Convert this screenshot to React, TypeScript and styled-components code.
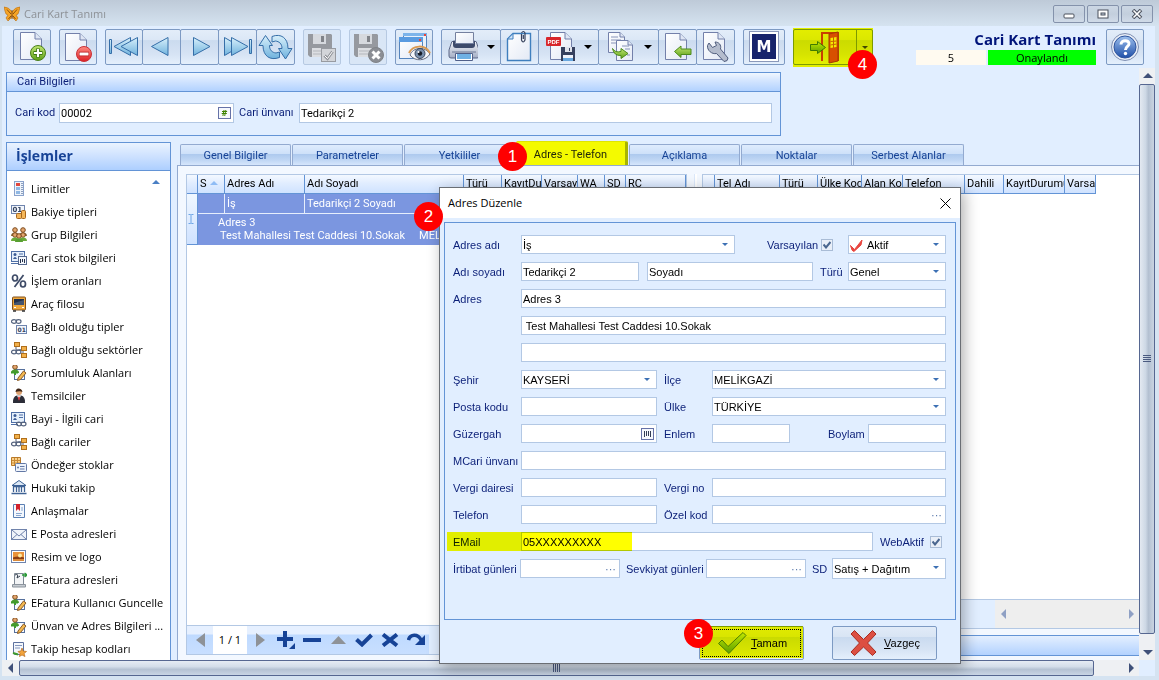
import React from "react";
import styled, { createGlobalStyle, css } from "styled-components";

const ui = `"Open Sans", "Noto Sans", sans-serif`;
const gridFont = `Roboto, "Noto Sans", sans-serif`;
const formFont = `"Liberation Sans", Arial, sans-serif`;

const Global = createGlobalStyle`
  * { box-sizing: border-box; }
  body { margin: 0; background: #d5e3f1; font: 11px/16px ${ui}; color: #000; }
  button, input, select { font: inherit; color: inherit; margin: 0; }
  svg { display: block; }
`;

/* ---------- window frame ---------- */

const Window = styled.div`
  position: relative;
  min-height: 100vh;
  display: flex;
  flex-direction: column;
  padding: 0 4px 4px 2px;
  background: #d5e3f1;
  overflow: hidden;
`;

const TitleBar = styled.header`
  height: 26px;
  display: flex;
  align-items: center;
  gap: 4px;
  margin: 0 -4px 0 -2px;
  padding: 2px 6px 0 4px;
  background: linear-gradient(#becad8, #d5e3f0);
  color: #8d9196;
`;

const TitleText = styled.span`
  flex: 1;
`;

const FrameButtons = styled.div`
  display: flex;
  gap: 2px;
`;

const FrameButton = styled.button`
  width: 32px;
  height: 18px;
  padding: 0;
  display: grid;
  place-items: center;
  border: 1px solid #8492ab;
  border-radius: 2px;
  background: linear-gradient(#ccd7e4, #c3cfdd 50%, #d0dbe8);
`;

const Client = styled.div`
  flex: 1;
  display: flex;
  flex-direction: column;
  background: #e1eeff;
`;

/* ---------- toolbar ---------- */

const Toolbar = styled.div`
  height: 42px;
  display: flex;
  gap: 8px;
  padding: 3px 11px 0 11px;
`;

const ToolGroup = styled.div`
  position: relative;
  display: flex;
`;

const ToolButton = styled.button<{ $w?: number }>`
  position: relative;
  width: ${(p) => p.$w ?? 38}px;
  height: 36px;
  padding: 0;
  flex: none;
  display: flex;
  align-items: center;
  border: 1px solid #7d9ac3;
  border-radius: 2px;
  background: linear-gradient(#e3edf9, #dbe7f6 30%, #cbdbef 31%, #d6e3f4 70%, #e4effc);
  & + & { margin-left: -1px; }
  &:disabled { border-color: #b6c9e2; background: #d9e6f6; }
`;

const Caret = styled.span`
  margin-left: 9px;
  border: 4px solid transparent;
  border-bottom: 0;
  border-top-color: #000;
`;

const ExitCaret = styled.span`
  align-self: stretch;
  margin-left: auto;
  width: 16px;
  border-left: 1px solid #7d9ac3;
  display: grid;
  place-items: center;
  &::after {
    content: "";
    border: 3px solid transparent;
    border-bottom: 0;
    border-top-color: #404860;
  }
`;

const Marker = styled.span`
  position: absolute;
  inset: -1px 0 1px 0;
  background: #ff0;
  mix-blend-mode: multiply;
  pointer-events: none;
`;

const Step = styled.span<{ $x: number; $y: number }>`
  position: absolute;
  left: ${(p) => p.$x}px;
  top: ${(p) => p.$y}px;
  z-index: 5;
  width: 29px;
  height: 29px;
  border-radius: 50%;
  background: #f00;
  color: #fff;
  font: 17px/29px ${formFont};
  text-align: center;
`;

const Status = styled.div`
  margin: 0 2px 0 auto;
  display: grid;
  grid-template-columns: 70px 108px;
  grid-template-rows: 21px 15px;
  column-gap: 2px;
  text-align: center;
  line-height: 15px;
`;

const StatusTitle = styled.h1`
  grid-column: 1 / 3;
  margin: 0;
  font-size: 15px;
  line-height: 21px;
  text-align: right;
  color: #00147a;
`;

const StatusCell = styled.span<{ $bg: string }>`
  background: ${(p) => p.$bg};
  overflow: hidden;
`;

/* ---------- scroll bars ---------- */

const Workspace = styled.div`
  flex: 1;
  display: grid;
  grid-template-columns: minmax(0, 1fr) 16px;
  grid-template-rows: minmax(0, 1fr) 16px;
`;

const ScrollV = styled.div`
  display: flex;
  flex-direction: column;
  background: #eef0f3;
`;

const ScrollH = styled.div`
  display: flex;
  background: #eef0f3;
`;

const ScrollArrow = styled.button`
  width: 17px;
  height: 16px;
  flex: none;
  padding: 0;
  border: 0;
  background: none;
  display: grid;
  place-items: center;
`;

const ThumbV = styled.div`
  flex: 1;
  margin: 0 0 10px;
  border: 1px solid #566791;
  border-radius: 2px;
  background: linear-gradient(90deg, #e3e9f1, #cdd8e5 40%, #b3c0d1 60%, #c9d4e2);
  display: grid;
  place-items: center;
`;

const ThumbH = styled.div`
  flex: 1;
  margin: 0 28px 0 0;
  border: 1px solid #566791;
  border-radius: 2px;
  background: linear-gradient(#e6ecf4, #d3dde9 40%, #b5c2d3 60%, #c9d5e5);
  display: grid;
  place-items: center;
`;

/* ---------- card header ---------- */

const Page = styled.main`
  padding: 4px 0 0 4px;
  display: flex;
  flex-direction: column;
  min-width: 0;
`;

const CardBox = styled.section`
  width: 775px;
  border: 1px solid #6394d6;
  font-family: ${gridFont};
`;

const CardTitle = styled.h2`
  margin: 0;
  height: 19px;
  padding: 0 10px;
  border-bottom: 1px solid #6394d6;
  background: linear-gradient(#f0f7ff, #d5e6ff 40%, #b2d2ff);
  font: 11px/18px ${gridFont};
  color: #0b1f78;
`;

const CardRow = styled.div`
  display: flex;
  align-items: center;
  padding: 11px 8px 12px;
  gap: 5px;
`;

const Label = styled.label<{ $w?: number }>`
  flex: none;
  width: ${(p) => (p.$w ? p.$w + "px" : "auto")};
  color: #0b1f78;
  white-space: nowrap;
`;

const box = css`
  height: 20px;
  border: 1px solid #b3c8e4;
  background: #fff;
`;

const Field = styled.span<{ $w?: number; $grow?: boolean; $h?: number }>`
  ${box}
  height: ${(p) => p.$h ?? 20}px;
  position: relative;
  flex: ${(p) => (p.$grow ? "1 1 0" : "none")};
  width: ${(p) => (p.$w ? p.$w + "px" : "auto")};
  min-width: 0;
  display: flex;
  align-items: center;
`;

const Input = styled.input`
  flex: 1;
  min-width: 0;
  width: 100%;
  height: 100%;
  padding: 0 1px;
  border: 0;
  outline: 0;
  background: transparent;
`;

const Select = styled.select<{ $pad?: number }>`
  appearance: none;
  flex: 1;
  min-width: 0;
  height: 100%;
  padding: 0 14px 0 ${(p) => p.$pad ?? 1}px;
  border: 0;
  outline: 0;
  background: transparent;
`;

const Drop = styled.span`
  position: absolute;
  right: 6px;
  top: 7px;
  border: 3px solid transparent;
  border-bottom: 0;
  border-top-color: #3c70b4;
  pointer-events: none;
`;

const Mini = styled.button`
  width: 13px;
  height: 12px;
  flex: none;
  margin-right: 2px;
  padding: 0;
  display: grid;
  place-items: center;
  border: 1px solid #6672a8;
  background: #f6f8fd;
  color: #3d8200;
  font: bold 9px/10px ${ui};
`;

const Dots = styled.button`
  width: 17px;
  flex: none;
  padding: 0;
  border: 0;
  background: none;
  color: #5474a8;
  line-height: 10px;
`;

/* ---------- side list ---------- */

const Columns = styled.div`
  flex: 1;
  display: flex;
  gap: 6px;
  margin-top: 6px;
`;

const Side = styled.nav`
  width: 165px;
  flex: none;
  border: 1px solid #6394d6;
  border-bottom: 0;
  background: #fff;
`;

const SideTitle = styled.h2`
  margin: 0;
  height: 28px;
  padding-left: 9px;
  border-bottom: 1px solid #6394d6;
  background: linear-gradient(#eaf3ff, #cde1ff 50%, #adcfff);
  color: #174396;
  font-size: 14px;
  line-height: 26px;
`;

const SideList = styled.ul`
  position: relative;
  margin: 0;
  padding: 6px 0 0;
  list-style: none;
`;

const SideUp = styled.span`
  position: absolute;
  right: 10px;
  top: 9px;
  border: 4px solid transparent;
  border-top: 0;
  border-bottom-color: #4a7fc4;
`;

const SideLink = styled.a`
  display: flex;
  align-items: center;
  gap: 4px;
  height: 23px;
  padding-left: 4px;
  color: #000;
  text-decoration: none;
  white-space: nowrap;
`;

/* ---------- tabs and grids ---------- */

const Content = styled.div`
  position: relative;
  flex: 1;
  min-width: 0;
  display: flex;
  flex-direction: column;
  font-family: ${gridFont};
`;

const Tabs = styled.div`
  display: flex;
  align-items: flex-end;
  gap: 1px;
  height: 23px;
  padding-left: 3px;
`;

const Tab = styled.button<{ $on?: boolean }>`
  width: 111px;
  height: 21px;
  padding: 2px 0 0;
  border: 1px solid #93aad0;
  border-bottom: 0;
  border-radius: 2px 2px 0 0;
  background: linear-gradient(#dfecfd, #cde0f9 45%, #adc9ee 46%, #bfd6f4 75%, #d6e6fc);
  color: #174396;
  ${(p) =>
    p.$on &&
    css`
      width: 112px;
      height: 24px;
      border: 0;
      border-top: 1px solid #dfe600;
      border-right: 3px solid #a8b400;
      background: #f4fa00;
      color: #22280a;
    `}
`;

const TabPanel = styled.div`
  flex: 1;
  display: flex;
  padding: 8px 0 0 8px;
  border: 1px solid #93aad0;
  border-width: 1px 0 0 1px;
  background: #f3f8ff;
`;

const Pane = styled.section<{ $w?: number }>`
  display: flex;
  flex-direction: column;
  flex: ${(p) => (p.$w ? "none" : "1 1 0")};
  width: ${(p) => (p.$w ? p.$w + "px" : "auto")};
  min-width: 0;
`;

const GridBox = styled.div`
  flex: 1;
  border: 1px solid #b3c8e4;
  border-right: 0;
  background: #fff;
  overflow: hidden;
`;

const Splitter = styled.div`
  width: 16px;
  flex: none;
  border-left: 1px solid #b3c8e4;
  background: linear-gradient(90deg, #f3f8ff 7px, #dbe8fa 7px, #dbe8fa 8px, #fff 8px, #fff 10px, #f3f8ff 10px);
`;

const Grid = styled.table`
  table-layout: fixed;
  width: 1px;
  border-collapse: separate;
  border-spacing: 0;
  th {
    height: 19px;
    padding: 0 0 0 2px;
    border-right: 1px solid #6394d6;
    border-bottom: 1px solid #6394d6;
    background: linear-gradient(#f4f9ff, #e1edff 45%, #cfe2ff);
    font-weight: normal;
    text-align: left;
    white-space: nowrap;
    overflow: hidden;
    line-height: 18px;
  }
`;

const Cell = styled.td`
  height: 20px;
  padding: 0 0 0 2px;
  background: #7b96e0;
  color: #fff;
  white-space: nowrap;
  border-right: 1px solid #e6eefc;
  border-bottom: 1px solid #e6eefc;
  line-height: 18px;
`;

const Preview = styled.td`
  height: 31px;
  padding: 2px 0 3px 20px;
  background: #7b96e0;
  color: #fff;
  white-space: nowrap;
  overflow: hidden;
  line-height: 13px;
`;

const PreviewLine = styled.div`
  display: flex;
  gap: 14px;
  padding-left: 2px;
`;

const Indicator = styled.td`
  padding: 0;
  border-right: 1px solid #6394d6;
  border-bottom: 1px solid #6394d6;
  background: linear-gradient(#f0f7ff, #cfe2ff);
  text-align: center;
`;

const SortMark = styled.span`
  display: inline-block;
  margin-left: 3px;
  border: 4px solid transparent;
  border-top: 0;
  border-bottom-color: #8fbcf5;
  vertical-align: 2px;
`;

const Navigator = styled.div`
  height: 29px;
  display: flex;
  margin-bottom: 5px;
  border: 1px solid #b3c8e4;
  border-top: 0;
  background: #e1eeff;
`;

const NavInner = styled.div`
  display: flex;
  width: 242px;
  background: linear-gradient(#e6f0ff 8px, #bfdaff 9px, #c8dfff);
`;

const NavButton = styled.button`
  width: 26px;
  padding: 0;
  border: 0;
  background: none;
  display: grid;
  place-items: center;
`;

const NavCount = styled.span`
  width: 34px;
  background: #fff;
  font-family: ${ui};
  text-align: center;
  line-height: 27px;
`;

const PaneScroll = styled.div`
  height: 29px;
  display: flex;
  justify-content: flex-end;
  border-bottom: 1px solid #b3c8e4;
  background: #e1eeff;
`;

const PaneTrack = styled.div`
  width: 144px;
  display: flex;
  justify-content: space-between;
  align-items: center;
  background: #eeeeee;
`;

const FooterBar = styled.div`
  height: 21px;
  margin: 6px 0 4px;
  border: 1px solid #6394d6;
  border-right: 0;
  background: linear-gradient(#e4efff, #b2d2ff);
`;

/* ---------- dialog ---------- */

const Dialog = styled.section`
  position: absolute;
  left: 439px;
  top: 187px;
  z-index: 3;
  width: 522px;
  border: 1px solid #6a6e74;
  background: #e1eeff;
  box-shadow: 3px 4px 14px rgba(0, 0, 0, 0.32);
  font: 11px/16px ${formFont};
`;

const DialogBar = styled.header`
  height: 30px;
  display: flex;
  align-items: center;
  justify-content: space-between;
  padding: 0 4px 0 8px;
  background: #fff;
  font-family: ${ui};
`;

const CloseButton = styled.button`
  width: 22px;
  height: 22px;
  padding: 0;
  border: 0;
  background: none;
  display: grid;
  place-items: center;
`;

const Form = styled.div`
  margin: 4px 4px 0;
  height: 398px;
  padding: 12px 9px 0 8px;
  border: 1px solid #6394d6;
  display: flex;
  flex-direction: column;
  gap: 8px;
`;

const Row = styled.div`
  position: relative;
  height: 19px;
  display: flex;
  align-items: center;
`;

const Space = styled.span<{ $w: number }>`
  flex: none;
  width: ${(p) => p.$w}px;
`;

const Check = styled.input`
  appearance: none;
  flex: none;
  width: 12px;
  height: 12px;
  border: 1px solid #a9bcd6;
  background: #e9eff8;
`;

const CheckWrap = styled.span<{ $ml: number; $mr: number }>`
  position: relative;
  display: flex;
  margin: 1px ${(p) => p.$mr}px 0 ${(p) => p.$ml}px;
  svg { position: absolute; left: 2px; top: 2px; pointer-events: none; }
`;

const RowMarker = styled(Marker)`
  inset: 0 auto 0 -6px;
  width: 185px;
`;

const Footer = styled.footer`
  position: relative;
  display: flex;
  justify-content: flex-end;
  gap: 28px;
  padding: 6px 23px 3px;
`;

const ActionButton = styled.button<{ $gap: number }>`
  position: relative;
  width: 105px;
  height: 34px;
  padding: 0 0 0 17px;
  display: flex;
  align-items: center;
  gap: ${(p) => p.$gap}px;
  border: 1px solid #7d9ac3;
  border-radius: 2px;
  background: linear-gradient(#e1ebf8, #d9e5f4 30%, #c9daef 31%, #d6e3f4 70%, #e4effc);
`;

const FocusRect = styled.span`
  position: absolute;
  inset: 2px;
  border: 1px dotted #000;
`;

/* ---------- drawings ---------- */

const HiddenSvg = styled.svg`
  position: absolute;
`;

const Defs = () => (
  <HiddenSvg width="0" height="0" aria-hidden="true">
    <defs>
      <linearGradient id="page" x1="0" y1="0" x2="1" y2="1"><stop offset="0" stopColor="#fff" /><stop offset="1" stopColor="#e3e9f5" /></linearGradient>
      <linearGradient id="arrow" x1="0" y1="0" x2="0" y2="1"><stop offset="0" stopColor="#d8f0fb" /><stop offset="1" stopColor="#6fb2dd" /></linearGradient>
      <linearGradient id="green" x1="0" y1="0" x2="0" y2="1"><stop offset="0" stopColor="#c3e873" /><stop offset="1" stopColor="#5c9f16" /></linearGradient>
      <linearGradient id="red" x1="0" y1="0" x2="0" y2="1"><stop offset="0" stopColor="#ff8a80" /><stop offset="1" stopColor="#dd1f25" /></linearGradient>
      <linearGradient id="blue" x1="0" y1="0" x2="0" y2="1"><stop offset="0" stopColor="#9dc0ee" /><stop offset="1" stopColor="#1f4fa8" /></linearGradient>
      <linearGradient id="metal" x1="0" y1="0" x2="0" y2="1"><stop offset="0" stopColor="#f4f6fa" /><stop offset="1" stopColor="#a3adc4" /></linearGradient>
    </defs>
  </HiddenSvg>
);

const Ico = ({ children, w = 36, h = 34 }: { children: React.ReactNode; w?: number; h?: number }) => (
  <svg width={w} height={h} viewBox={`0 0 ${w} ${h}`} fill="none" aria-hidden="true">{children}</svg>
);

const Sheet = ({ x, y, w, h, f = 7 }: { x: number; y: number; w: number; h: number; f?: number }) => (
  <g transform={`translate(${x} ${y})`} stroke="#7380aa">
    <path d={`M.5 .5H${w - f}L${w - 0.5} ${f}V${h - 0.5}H.5Z`} fill="url(#page)" />
    <path d={`M${w - f} .5V${f}H${w - 0.5}`} fill="#dfe6f4" />
  </g>
);

const Disk = () => (
  <g>
    <path d="M4 4H27L28 5V27H6L4 25Z" fill="#96999f" />
    <path d="M9 4H22V14H9Z" fill="#d6d9de" />
    <path d="M17 6H20V12H17Z" fill="#808389" />
    <path d="M8 18H24V27H8Z" fill="#dcdee2" />
    <path d="M9 21H23M9 24H23" stroke="#b4b7bc" />
  </g>
);

const ICONS = {
  add: <><Sheet x={6} y={2} w={22} h={28} /><circle cx="24" cy="23" r="7.5" fill="url(#green)" stroke="#4a7f1b" /><path d="M24 18.500V27.500M19.500 23H28.500" stroke="#3c7412" strokeWidth="4" /><path d="M24 19V27M20 23H28" stroke="#fff" strokeWidth="2.200" /></>,
  remove: <><Sheet x={5} y={3} w={22} h={28} /><circle cx="24" cy="24" r="7.500" fill="url(#red)" stroke="#c93238" /><path d="M19 24H29" stroke="#b3181e" strokeWidth="4.500" /><path d="M19.500 24H28.500" stroke="#fff" strokeWidth="3" /></>,
  first: <g stroke="#356ea8" fill="url(#arrow)"><path d="M3.500 9.500H5.500V23.500H3.500Z" /><path d="M24.500 7.500V25.500L8 16.500Z" /><path d="M31.500 7.500V25.500L15 16.500Z" /></g>,
  prev: <path d="M25 7.500V25.500L8.500 16.500Z" stroke="#356ea8" fill="url(#arrow)" />,
  next: <path d="M12.500 7.500V25.500L29 16.500Z" stroke="#356ea8" fill="url(#arrow)" />,
  last: <g stroke="#356ea8" fill="url(#arrow)"><path d="M5.500 7.500V25.500L21 16.500Z" /><path d="M12.500 7.500V25.500L29 16.500Z" /><path d="M30.500 9.500H32.500V23.500H30.500Z" /></g>,
  refresh: <g stroke="#356ea8" fill="url(#arrow)" strokeLinejoin="round"><path d="M8.500 5.500L15.500 15.500H12.500C12.500 20 15 22.500 19 23L22.500 22V27.500C13 31 6 26 6 15.500H2Z" /><path d="M28.500 29L21.500 18.500H25C25 13.500 22 11.500 18.500 11L15 12V6.500C24 3 31 8 31 18.500H35Z" /></g>,
  save: <><Disk /><rect x="17.500" y="18.500" width="14" height="13" fill="#d3d5d9" stroke="#989ba1" /><path d="M20.500 25.500L23.500 28.500L28.500 21.500" stroke="#92959b" strokeWidth="3" /><path d="M20.500 25.500L23.500 28.500L28.500 21.500" stroke="#fff" strokeWidth="1" /></>,
  cancel: <><Disk /><circle cx="26" cy="25" r="7.500" fill="#8b8e94" stroke="#808388" /><path d="M22.500 21.500L29.500 28.500M29.500 21.500L22.500 28.500" stroke="#fff" strokeWidth="3" /></>,
  preview: <><rect x="7.500" y="3.500" width="23" height="18" fill="#e8f1fb" stroke="#5584bd" /><path d="M7 3H31V6H7Z" fill="#7db4ea" /><rect x="3.500" y="7.500" width="23" height="21" fill="url(#page)" stroke="#5584bd" /><path d="M3 7H27V12H3Z" fill="#5a9be0" /><path d="M23 9H25V11H23ZM28 4H30V6H28Z" fill="#e8433a" /><path d="M14 25C17 17 29 16 34 24C30 31 19 32 14 25Z" fill="#f6f7fa" stroke="#626a7e" /><path d="M13 23C17 15 29 14 34 23" stroke="#d99a52" strokeWidth="2" /><circle cx="24" cy="23.500" r="5" fill="#7a90ac" stroke="#3b485f" /><circle cx="24" cy="23.500" r="2.200" fill="#161b27" /><circle cx="22.500" cy="22" r="1" fill="#fff" /></>,
  print: <><path d="M9 14Q9 11 12 11H32Q35 11 35 14L37 20V26Q37 28 35 28H9Q7 28 7 26V20Z" fill="url(#metal)" stroke="#5b6787" /><path d="M11 11H33V15Q33 18 30 18H14Q11 18 11 15Z" fill="#3d4a6b" /><path d="M13.500 2.500H31.500V13.500H13.500Z" fill="url(#page)" stroke="#74809f" /><path d="M10 22H34" stroke="#6d7894" /><path d="M13.500 23.500H30.500V30.500H13.500Z" fill="#fff" stroke="#50608a" /><path d="M15 24H29V29H15Z" fill="#6fb1e4" /></>,
  attach: <><path d="M12 3.500H29.500V30.500H6.500V9Z" fill="url(#page)" stroke="#3f7fbe" strokeWidth="1.400" /><path d="M12 3.500V9H6.500Z" fill="#cfe3f7" stroke="#3f7fbe" /><path d="M20.500 4V10Q22 14 24 10V3Q22.500 0 20.500 3M22.300 5V9" stroke="#36415c" strokeWidth="1.200" /></>,
  pdf: <><Sheet x={11} y={2} w={22} h={28} /><rect x="7" y="7" width="15" height="9" rx="1" fill="#d8262b" /><text x="8.500" y="14" fontFamily="Liberation Sans" fontSize="6" fontWeight="700" fill="#fff">PDF</text><rect x="22" y="17" width="14" height="14" fill="#35405e" /><path d="M26 17H33V22H26Z" fill="#dfe3ec" /><path d="M30.500 18V21" stroke="#35405e" /><path d="M24 25H34V31H24Z" fill="#eef2fa" /><path d="M24 28H34V31H24Z" fill="#69a8df" /></>,
  copy: <><Sheet x={9} y={2} w={17} h={21} f={5} /><path d="M12 7H19M12 10H22M12 13H17" stroke="#8894b8" /><Sheet x={17} y={10} w={17} h={21} f={5} /><path d="M23 16H30M26 19H31M28 25H31" stroke="#8894b8" /><path d="M13.500 18.500Q16 23 22 21.500V18.500L29 23.500L22 28.500V25.500Q15 26 13.500 18.500Z" fill="url(#green)" stroke="#4c8a1c" /></>,
  import: <><Sheet x={6} y={3} w={22} h={27} /><path d="M15.500 21.500L22 16V19H32V24.500H22V27.500Z" fill="url(#green)" stroke="#4c8a1c" /></>,
  wrench: <><Sheet x={6} y={2} w={22} h={28} /><path d="M12 13L15.500 17.500L19.500 15.500L18 12C22 12 24.500 15 23.500 19L31 28Q31 31.500 27 31.500L19.500 23.500C15 24.500 10 20.500 10.500 15.500Z" fill="#b4bccd" stroke="#4f5c7c" strokeLinejoin="round" /></>,
  help: <><circle cx="18" cy="17" r="13.500" fill="#e9eef7" stroke="#7e8fb2" /><circle cx="18" cy="17" r="11" fill="url(#blue)" stroke="#2f559d" /><path d="M14 14.500C14 9.500 22.500 9.500 22 14C21.800 16.500 18.500 16.500 18.500 20" stroke="#fff" strokeWidth="3" /><circle cx="18.500" cy="23.500" r="1.700" fill="#fff" /></>,
};

const MLogo = () => (
  <Ico w={40}>
    <rect x="5.500" y="1.500" width="29" height="30" fill="#fff" stroke="#8a98ba" />
    <rect x="8" y="4" width="24" height="25" fill="#17236b" />
    <text x="20" y="22" textAnchor="middle" fontFamily="DejaVu Sans" fontSize="15" fontWeight="700" fill="#fff">M</text>
  </Ico>
);

const Door = () => (
  <Ico w={50}>
    <path d="M28 31V3H44V31" stroke="#c8401c" strokeWidth="2" />
    <path d="M35 4L44 2V31L35 33Z" fill="#d8501c" stroke="#a53a10" />
    <path d="M36.500 8L42.500 7V17L36.500 18Z" fill="#f5e9b0" />
    <path d="M39.500 7V18M36.500 11.500L42.500 11M36.500 15L42.500 14" stroke="#c8601c" />
    <path d="M16.500 14.500H23.500V11.500L31.500 17.500L23.500 23.500V20.500H16.500Z" fill="url(#green)" stroke="#3f7a14" />
  </Ico>
);

const Person = ({ x = 0, y = 0, c = "#6bab3a" }: { x?: number; y?: number; c?: string }) => (
  <g transform={`translate(${x} ${y})`}><circle cx="4" cy="3" r="2.300" fill="#e3a56e" stroke="#7c4a1c" /><path d="M0 9Q0 5.500 4 5.500T8 9Z" fill={c} /></g>
);
const Pencil = () => <path d="M7 13L12.500 6L15 8L9.500 14.500L6.500 15.500Z" fill="#f2b850" stroke="#8b5a25" />;
const Chain = ({ x, y }: { x: number; y: number }) => (
  <g transform={`translate(${x} ${y})`} stroke="#56647f" strokeWidth="1.200"><ellipse cx="3" cy="2.500" rx="2.500" ry="1.800" /><ellipse cx="7.500" cy="2.500" rx="2.500" ry="1.800" /></g>
);
const edit = <><rect x="3.500" y="4.500" width="10" height="10" fill="#f7faff" stroke="#56709c" /><Person y={-1} c="#4c9a30" /><path d="M0 7.500H7M4 7V10" stroke="#3f9a2c" strokeWidth="2" /><Pencil /></>;
const tree = <><path d="M5 4V8H12V13M8 8H12" stroke="#555e77" /><g fill="#f2b04a" stroke="#b06f1b"><rect x="3.500" y=".5" width="5" height="4" /><rect x="10.500" y="4.500" width="5" height="4" /><rect x="10.500" y="11.500" width="5" height="4" /></g><Chain x={0} y={7.500} /></>;

const SIDE: [string, React.ReactNode][] = [
  ["Limitler", <><rect x="3.500" y=".5" width="9" height="14" fill="#eef4fb" stroke="#8aa2cb" /><path d="M5 2H9V5H5Z" fill="#e0463c" /><path d="M5 6H9V9H5ZM5 10H9V13H5Z" fill="#8fb7e3" /><path d="M11 2V13" stroke="#2d4a80" strokeDasharray="1 1" /></>],
  ["Bakiye tipleri", <><rect x=".5" y="1.500" width="13" height="8" fill="#f2f6fc" stroke="#6f84ad" /><text x="1.500" y="8" fontFamily="DejaVu Sans" fontSize="7" fontWeight="700" fill="#34435f">01</text><rect x="5.500" y="9.500" width="5" height="5" rx="1" fill="#f5b75a" stroke="#a8661a" /><rect x="10.500" y="6.500" width="4" height="8" rx="1" fill="#f5b75a" stroke="#a8661a" /></>],
  ["Grup Bilgileri", <><Person c="#8a6a3c" /><Person x={8} c="#8a6a3c" /><Person x={0} y={5} /><Person x={8} y={5} /><Person x={4} y={6} c="#58a032" /></>],
  ["Cari stok bilgileri", <><rect x=".5" y="1.500" width="13" height="10" fill="#e6f0fb" stroke="#4f6fa6" /><circle cx="4" cy="4.500" r="1.500" fill="#3c5c96" /><path d="M2 9Q4 5 6 9Z" fill="#3c5c96" /><path d="M8 4H12M0 13.500H7" stroke="#4f6fa6" /><rect x="7.500" y="6.500" width="8" height="8" fill="#f5f8fd" stroke="#56698f" /><path d="M9.500 9V13M11.500 9V12M13.500 9V13" stroke="#26324b" /></>],
  ["İşlem oranları", <><g stroke="#3d4a66" strokeWidth="1.700"><ellipse cx="4" cy="5" rx="2.500" ry="3" /><ellipse cx="12" cy="11" rx="2.500" ry="3" /><path d="M12.500 2L3.500 14" /></g></>],
  ["Araç filosu", <><rect x="1.500" y="1" width="13" height="13" rx="1" fill="#f0a83c" stroke="#80501c" /><path d="M3 3H13V9H3Z" fill="#223048" /><path d="M3 7L13 4V9H3Z" fill="#45556f" /><path d="M3 11H5V12H3ZM11 11H13V12H11Z" fill="#fff" /><path d="M2 15H5M11 15H14" stroke="#333" strokeWidth="1.500" /></>],
  ["Bağlı olduğu tipler", <><Chain x={0} y={0} /><rect x="5.500" y="6.500" width="10" height="8" fill="#f2f6fc" stroke="#6f84ad" /><text x="6.500" y="13" fontFamily="DejaVu Sans" fontSize="6" fontWeight="700" fill="#34435f">01</text></>],
  ["Bağlı olduğu sektörler", tree],
  ["Sorumluluk Alanları", edit],
  ["Temsilciler", <><circle cx="8" cy="4" r="3" fill="#dca070" /><path d="M4.500 4Q5 0 8 .5T11.500 4Q9 2.500 4.500 4Z" fill="#3c2415" /><path d="M2 15Q1.500 8.500 6 7.500H10Q14.500 8.500 14 15Z" fill="#2b2d38" /><path d="M6 7.500L8 12L10 7.500Z" fill="#fff" /><path d="M8 8L9 10L8 13L7 10Z" fill="#d02020" /></>],
  ["Bayi - İlgili cari", <><rect x=".5" y="1.500" width="13" height="10" fill="#e6f0fb" stroke="#4f6fa6" /><circle cx="4" cy="4.500" r="1.500" fill="#3c5c96" /><path d="M2 9Q4 5 6 9Z" fill="#3c5c96" /><path d="M8 4H12M8 6.500H12M0 13.500H7" stroke="#4f6fa6" /><Chain x={5} y={10.500} /></>],
  ["Bağlı cariler", tree],
  ["Öndeğer stoklar", <><path d="M.5 .5H9.500V8.500H.5Z" fill="#fbd18a" stroke="#b97a28" /><path d="M3.500 1V8M6.500 1V8M1 3.500H9M1 6H9" stroke="#c98a35" /><rect x="4.500" y="6.500" width="11" height="8" rx="1" fill="#eef3fb" stroke="#6278a5" /><circle cx="7" cy="10.500" r="1" fill="#6278a5" /><path d="M9 9.500H13.500M9 12H13.500" stroke="#6278a5" /></>],
  ["Hukuki takip", <><path d="M8 .5L15 5.500H1Z" fill="#dce8f6" stroke="#3e6294" /><path d="M2.500 6V12M5.500 6V12M8 6V12M10.500 6V12M13.500 6V12" stroke="#3e6294" strokeWidth="1.300" /><path d="M.5 13.500H15.500M2 6.500H14" stroke="#3e6294" strokeWidth="1.500" /></>],
  ["Anlaşmalar", <><path d="M2.500 1.500H13.500V14.500H2.500Z" fill="#f4f8fd" stroke="#5c80b4" /><path d="M5 1H9V8L7 6L5 8Z" fill="#d3222c" /><path d="M5 10.500H11M5 12.500H10M11 4V8" stroke="#8aa6cf" /></>],
  ["E Posta adresleri", <><rect x=".5" y="3.500" width="15" height="10" fill="#eff3fa" stroke="#7083ab" /><path d="M1 4L8 10L15 4M1 13L6 8.500M15 13L10 8.500" stroke="#7083ab" /></>],
  ["Resim ve logo", <><rect x=".5" y="1.500" width="14" height="12" fill="#fff" stroke="#6f84ad" /><path d="M2 3H13V12H2Z" fill="#e9923a" /><path d="M2 8.500Q7 6.500 13 8.500V12H2Z" fill="#8c3d12" /><path d="M2 10H13V12H2Z" fill="#d98a3c" /><circle cx="9" cy="6.500" r="2" fill="#ffe9a0" /></>],
  ["EFatura adresleri", <><path d="M3.500 1.500H12.500V12.500H3.500Z" fill="#f2f4f6" stroke="#7e8894" /><path d="M4 3Q8 1 6 6L9 4" stroke="#333e4d" /><path d="M11 3H16M13.500 1L16 3L13.500 5" stroke="#2c9a3a" strokeWidth="1.400" /><path d="M1.500 12.500H14.500V15H1.500Z" fill="#c6cbd1" stroke="#8c949d" /></>],
  ["EFatura Kullanıcı Guncelle", edit],
  ["Ünvan ve Adres Bilgileri ...", edit],
  ["Takip hesap kodları", <><path d="M2.500 1.500H12.500V13.500H4Q1.500 13 2.500 10Z" fill="#f4f7fc" stroke="#5d719e" /><path d="M4 4.500H11M4 7H9" stroke="#8496bc" /><path d="M11 7L12 10L15.500 10.500L13 12.500L14 15.500L11 14L8.500 15.500L9 12.500L7 10.500L10 10Z" fill="#f2a43c" stroke="#b86c1c" strokeWidth=".7" /><path d="M2 12L7 13.500" stroke="#3f9a2c" strokeWidth="2" /></>],
];

const Butterfly = () => (
  <svg width="16" height="16" viewBox="0 0 16 16" aria-hidden="true">
    <path d="M8 6Q5 1 0 1L1 5L2 8L4 9L2 12L4 15L7 12L8 9L9 12L12 15L14 12L12 9L14 8L15 5L16 1Q11 1 8 6Z" fill="#f6a526" stroke="#b9690c" strokeWidth=".6" />
    <path d="M8 4V13M7 8L3 3.500M9 8L13 3.500M7 10L4.500 13M9 10L11.500 13" stroke="#7a430c" strokeWidth=".9" />
  </svg>
);

const Arrow = ({ dir, c = "#3f5079" }: { dir: "u" | "d" | "l" | "r"; c?: string }) => {
  const d = { u: "M0 7L5 2L10 7Z", d: "M0 3L5 8L10 3Z", l: "M7 0L2 5L7 10Z", r: "M3 0L8 5L3 10Z" }[dir];
  return <svg width="10" height="10" viewBox="0 0 10 10" aria-hidden="true"><path d={d} fill={c} /></svg>;
};

const TickMark = () => (
  <svg width="8" height="8" viewBox="0 0 8 8" fill="none" aria-hidden="true"><path d="M.5 3.500L3 6.500L7.500 1" stroke="#4a668f" strokeWidth="2" /></svg>
);

/* ---------- form parts ---------- */

type FP = { id: string; label: string; value?: string; w?: number; grow?: boolean; children?: React.ReactNode };

const Text = ({ id, label, value = "", w, grow, children }: FP) => (
  <Field $w={w} $grow={grow} $h={19}>
    <Input id={id} aria-label={label} defaultValue={value} />
    {children}
  </Field>
);

const Combo = ({ id, label, value = "", w, grow, h = 19, pad, children }: FP & { h?: number; pad?: number }) => (
  <Field $w={w} $grow={grow} $h={h}>
    {children}
    <Select id={id} aria-label={label} defaultValue={value} $pad={pad}>
      <option>{value}</option>
    </Select>
    <Drop />
  </Field>
);

const AddressDialog = () => (
  <Dialog role="dialog" aria-label="Adres Düzenle">
    <Step $x={-26} $y={14}>2</Step>
    <DialogBar>
      Adres Düzenle
      <CloseButton aria-label="Kapat">
        <svg width="11" height="11" viewBox="0 0 11 11"><path d="M.5 .5L10.500 10.500M10.500 .5L.5 10.500" stroke="#000" /></svg>
      </CloseButton>
    </DialogBar>
    <Form>
      <Row>
        <Label htmlFor="adi" $w={68}>Adres adı</Label>
        <Combo id="adi" label="Adres adı" value="İş" w={214} />
        <Space $w={32} />
        <Label htmlFor="vars" $w={49}>Varsayılan</Label>
        <CheckWrap $ml={5} $mr={15}><Check id="vars" type="checkbox" defaultChecked /><TickMark /></CheckWrap>
        <Combo id="aktif" label="Durum" value="Aktif" grow pad={4}>
          <svg width="14" height="14" viewBox="0 0 14 14"><path d="M1.500 7.500L5.500 11.500L13 2L12 7L5.500 13Q4 14 3 12Z" fill="#e8453f" stroke="#e8453f" /></svg>
        </Combo>
      </Row>
      <Row>
        <Label htmlFor="ad" $w={68}>Adı soyadı</Label>
        <Text id="ad" label="Adı" value="Tedarikçi 2" w={118} />
        <Space $w={8} />
        <Text id="soyad" label="Soyadı" value="Soyadı" grow />
        <Space $w={7} />
        <Label htmlFor="turu" $w={28}>Türü</Label>
        <Combo id="turu" label="Türü" value="Genel" w={98} />
      </Row>
      <Row><Label htmlFor="adres1" $w={68}>Adres</Label><Text id="adres1" label="Adres 1" value="Adres 3" grow /></Row>
      <Row><Space $w={68} /><Text id="adres2" label="Adres 2" value=" Test Mahallesi Test Caddesi 10.Sokak" grow /></Row>
      <Row><Space $w={68} /><Text id="adres3" label="Adres 3" grow /></Row>
      <Row>
        <Label htmlFor="sehir" $w={68}>Şehir</Label><Combo id="sehir" label="Şehir" value="KAYSERİ" w={136} />
        <Space $w={7} /><Label htmlFor="ilce" $w={48}>İlçe</Label><Combo id="ilce" label="İlçe" value="MELİKGAZİ" grow />
      </Row>
      <Row>
        <Label htmlFor="posta" $w={68}>Posta kodu</Label><Text id="posta" label="Posta kodu" w={136} />
        <Space $w={7} /><Label htmlFor="ulke" $w={48}>Ülke</Label><Combo id="ulke" label="Ülke" value="TÜRKİYE" grow />
      </Row>
      <Row>
        <Label htmlFor="guz" $w={68}>Güzergah</Label>
        <Text id="guz" label="Güzergah" w={136}>
          <Mini aria-label="Güzergah seç"><svg width="9" height="6" viewBox="0 0 9 6"><path d="M1.500 0V6M3.500 0V5M5.500 0V5M7.500 0V6" stroke="#333c55" /></svg></Mini>
        </Text>
        <Space $w={7} /><Label htmlFor="enlem" $w={48}>Enlem</Label><Text id="enlem" label="Enlem" w={78} />
        <Space $w={38} /><Label htmlFor="boylam" $w={40}>Boylam</Label><Text id="boylam" label="Boylam" grow />
      </Row>
      <Row><Label htmlFor="mcari" $w={68}>MCari ünvanı</Label><Text id="mcari" label="MCari ünvanı" grow /></Row>
      <Row>
        <Label htmlFor="vd" $w={68}>Vergi dairesi</Label><Text id="vd" label="Vergi dairesi" w={136} />
        <Space $w={7} /><Label htmlFor="vn" $w={48}>Vergi no</Label><Text id="vn" label="Vergi no" grow />
      </Row>
      <Row>
        <Label htmlFor="tel" $w={68}>Telefon</Label><Text id="tel" label="Telefon" w={136} />
        <Space $w={7} /><Label htmlFor="ozel" $w={48}>Özel kod</Label>
        <Text id="ozel" label="Özel kod" grow><Dots aria-label="Özel kod seç">···</Dots></Text>
      </Row>
      <Row>
        <Label htmlFor="email" $w={68}>EMail</Label><Text id="email" label="EMail" value="05XXXXXXXXX" w={352} />
        <Space $w={7} /><Label htmlFor="web" $w={46}>WebAktif</Label>
        <CheckWrap $ml={4} $mr={0}><Check id="web" type="checkbox" defaultChecked /><TickMark /></CheckWrap>
        <RowMarker />
      </Row>
      <Row>
        <Label htmlFor="irt" $w={67}>İrtibat günleri</Label>
        <Text id="irt" label="İrtibat günleri" w={100}><Dots aria-label="İrtibat günü seç">···</Dots></Text>
        <Space $w={6} /><Label htmlFor="sevk" $w={80}>Sevkiyat günleri</Label>
        <Text id="sevk" label="Sevkiyat günleri" w={100}><Dots aria-label="Sevkiyat günü seç">···</Dots></Text>
        <Space $w={6} /><Label htmlFor="sd" $w={20}>SD</Label>
        <Combo id="sd" label="SD" value="Satış + Dağıtım" grow h={21} />
      </Row>
    </Form>
    <Footer>
      <ActionButton $gap={4}>
        <svg width="30" height="24" viewBox="0 0 30 24"><path d="M1.500 12.500L5 9L11 15.500L26 1.500L29 4.500L12 22.500Z" fill="url(#green)" stroke="#4c7d1a" /></svg>
        <span><u>T</u>amam</span>
        <FocusRect />
        <Marker />
        <Step $x={-16} $y={-8}>3</Step>
      </ActionButton>
      <ActionButton $gap={7}>
        <svg width="27" height="26" viewBox="0 0 27 26"><path d="M4.500 .5L13.500 9.500L22.500 .5L26 4L17.500 13L26 22L22.500 25.500L13.500 17L4.500 25.500L1 22L9.500 13L1 4Z" fill="#dc4f42" stroke="#a82c20" /></svg>
        <span><u>V</u>azgeç</span>
      </ActionButton>
    </Footer>
  </Dialog>
);

const cols = (ws: number[]) => <colgroup>{ws.map((w, i) => <col key={i} style={{ width: w }} />)}</colgroup>;

const TABS = ["Genel Bilgiler", "Parametreler", "Yetkililer", "Adres - Telefon", "Açıklama", "Noktalar", "Serbest Alanlar"];

const Tool = ({ icon, name, w, caret, disabled }: { icon: keyof typeof ICONS; name: string; w?: number; caret?: boolean; disabled?: boolean }) => (
  <ToolButton $w={w} title={name} aria-label={name} disabled={disabled}>
    <Ico>{ICONS[icon]}</Ico>
    {caret && <Caret />}
  </ToolButton>
);

export default function App() {
  return (
    <Window>
      <Global />
      <Defs />
      <TitleBar>
        <Butterfly />
        <TitleText>Cari Kart Tanımı</TitleText>
        <FrameButtons>
          <FrameButton aria-label="Küçült"><svg width="12" height="10" viewBox="0 0 12 10"><rect x="1" y="5" width="10" height="4" rx="1" fill="#fff" stroke="#4a505c" /></svg></FrameButton>
          <FrameButton aria-label="Ekranı kapla"><svg width="12" height="10" viewBox="0 0 12 10"><rect x="1" y="1" width="10" height="8" fill="#fff" stroke="#4a505c" /><rect x="4" y="4" width="4" height="2" fill="#c3cfdd" stroke="#4a505c" /></svg></FrameButton>
          <FrameButton aria-label="Kapat"><svg width="12" height="10" viewBox="0 0 12 10"><path d="M2 1L10 9M10 1L2 9" stroke="#4a505c" strokeWidth="3.600" /><path d="M2.500 1.500L9.500 8.500M9.500 1.500L2.500 8.500" stroke="#fff" strokeWidth="1.600" /></svg></FrameButton>
        </FrameButtons>
      </TitleBar>
      <Client>
        <Toolbar>
          <ToolGroup><Tool icon="add" name="Yeni" /></ToolGroup>
          <ToolGroup><Tool icon="remove" name="Sil" /></ToolGroup>
          <ToolGroup>
            <Tool icon="first" name="İlk" />
            <Tool icon="prev" name="Önceki" w={39} />
            <Tool icon="next" name="Sonraki" w={39} />
            <Tool icon="last" name="Son" w={39} />
            <Tool icon="refresh" name="Yenile" w={39} />
          </ToolGroup>
          <ToolGroup><Tool icon="save" name="Kaydet" disabled /></ToolGroup>
          <ToolGroup><Tool icon="cancel" name="Kaydetme" disabled /></ToolGroup>
          <ToolGroup><Tool icon="preview" name="Önizle" /></ToolGroup>
          <ToolGroup>
            <Tool icon="print" name="Yazdır" w={60} caret />
            <Tool icon="attach" name="Ekle" w={39} />
            <Tool icon="pdf" name="PDF" w={61} caret />
            <Tool icon="copy" name="Kopyala" w={61} caret />
            <Tool icon="import" name="İçe al" w={39} />
            <Tool icon="wrench" name="Ayarlar" w={39} />
          </ToolGroup>
          <ToolGroup><ToolButton $w={42} aria-label="M"><MLogo /></ToolButton></ToolGroup>
          <ToolGroup>
            <ToolButton $w={80} aria-label="Çıkış"><Door /><ExitCaret /></ToolButton>
            <Marker />
            <Step $x={55} $y={21}>4</Step>
          </ToolGroup>
          <Status>
            <StatusTitle>Cari Kart Tanımı</StatusTitle>
            <StatusCell $bg="#fffaf0">5</StatusCell>
            <StatusCell $bg="#00ff00">Onaylandı</StatusCell>
          </Status>
          <ToolGroup><Tool icon="help" name="Yardım" /></ToolGroup>
        </Toolbar>

        <Workspace>
          <Page>
            <CardBox>
              <CardTitle>Cari Bilgileri</CardTitle>
              <CardRow>
                <Label htmlFor="kod" $w={39}>Cari kod</Label>
                <Field $w={175}><Input id="kod" defaultValue="00002" /><Mini aria-label="Cari seç">#</Mini></Field>
                <Label htmlFor="unvan" $w={55}>Cari ünvanı</Label>
                <Field $grow><Input id="unvan" defaultValue="Tedarikçi 2" /></Field>
              </CardRow>
            </CardBox>

            <Columns>
              <Side>
                <SideTitle>İşlemler</SideTitle>
                <SideList>
                  {SIDE.map(([t, icon], i) => (
                    <li key={i}><SideLink href="#"><Ico w={16} h={16}>{icon}</Ico>{t}</SideLink></li>
                  ))}
                  <SideUp />
                </SideList>
              </Side>

              <Content>
                <Step $x={321} $y={0}>1</Step>
                <Tabs role="tablist">
                  {TABS.map((t, i) => <Tab key={t} role="tab" aria-selected={i === 3} $on={i === 3}>{t}</Tab>)}
                </Tabs>
                <TabPanel>
                  <Pane $w={500}>
                    <GridBox>
                      <Grid>
                        {cols([11, 27, 80, 159, 38, 40, 36, 27, 21, 60])}
                        <thead>
                          <tr><th /><th>S<SortMark /></th><th>Adres Adı</th><th>Adı Soyadı</th><th>Türü</th><th>KayıtDu</th><th>Varsay</th><th>WA</th><th>SD</th><th>RC</th></tr>
                        </thead>
                        <tbody>
                          <tr>
                            <Indicator rowSpan={2}><svg width="8" height="10" viewBox="0 0 8 10" fill="none"><path d="M1.500 .5H3.500L4 1L4.500 .5H6.500M4 1V9M1.500 9.500H3.500L4 9L4.500 9.500H6.500" stroke="#6fa6e6" /></svg></Indicator>
                            <Cell /><Cell>İş</Cell><Cell>Tedarikçi 2 Soyadı</Cell><Cell /><Cell /><Cell /><Cell /><Cell /><Cell />
                          </tr>
                          <tr>
                            <Preview colSpan={9}>
                              Adres 3
                              <PreviewLine><span>Test Mahallesi Test Caddesi 10.Sokak</span><span>MELİKGAZİ</span></PreviewLine>
                            </Preview>
                          </tr>
                        </tbody>
                      </Grid>
                    </GridBox>
                    <Navigator>
                      <NavInner>
                        <NavButton aria-label="Önceki kayıt"><svg width="9" height="14" viewBox="0 0 9 14"><path d="M9 0V14L0 7Z" fill="#8e9297" /></svg></NavButton>
                        <NavCount>1 / 1</NavCount>
                        <NavButton aria-label="Sonraki kayıt"><svg width="9" height="14" viewBox="0 0 9 14"><path d="M0 0V14L9 7Z" fill="#8e9297" /></svg></NavButton>
                        <NavButton aria-label="Kayıt ekle"><svg width="19" height="18" viewBox="0 0 19 18"><path d="M6 0H10V6H16V10H10V16H6V10H0V6H6ZM18 12V18H12Z" fill="#174396" /></svg></NavButton>
                        <NavButton aria-label="Kayıt sil"><svg width="18" height="4" viewBox="0 0 18 4"><path d="M0 0H18V4H0Z" fill="#174396" /></svg></NavButton>
                        <NavButton aria-label="Düzenle"><svg width="15" height="8" viewBox="0 0 15 8"><path d="M0 8L7.500 0L15 8Z" fill="#8e9297" /></svg></NavButton>
                        <NavButton aria-label="Onayla"><svg width="18" height="14" viewBox="0 0 18 14"><path d="M1.500 6.500L7 11.500L16.500 2" fill="none" stroke="#174396" strokeWidth="4" /></svg></NavButton>
                        <NavButton aria-label="İptal"><svg width="18" height="14" viewBox="0 0 18 14"><path d="M2 1.500L16 12.500M16 1.500L2 12.500" stroke="#174396" strokeWidth="4" /></svg></NavButton>
                        <NavButton aria-label="Yenile"><svg width="18" height="14" viewBox="0 0 18 14"><path d="M1.500 7C3 1 11 .5 14 7" fill="none" stroke="#174396" strokeWidth="3.500" /><path d="M18 2V12H8Z" fill="#174396" /></svg></NavButton>
                      </NavInner>
                    </Navigator>
                  </Pane>
                  <Splitter />
                  <Pane>
                    <GridBox>
                      <Grid>
                        {cols([12, 65, 38, 44, 41, 62, 39, 61, 31])}
                        <thead>
                          <tr><th /><th>Tel Adı</th><th>Türü</th><th>Ülke Kod</th><th>Alan Ko</th><th>Telefon</th><th>Dahili</th><th>KayıtDurumu</th><th>Varsa</th></tr>
                        </thead>
                      </Grid>
                    </GridBox>
                    <PaneScroll>
                      <PaneTrack>
                        <ScrollArrow aria-label="Sola"><Arrow dir="l" c="#8fa0c4" /></ScrollArrow>
                        <ScrollArrow aria-label="Sağa"><Arrow dir="r" c="#8fa0c4" /></ScrollArrow>
                      </PaneTrack>
                    </PaneScroll>
                    <FooterBar />
                  </Pane>
                </TabPanel>
              </Content>
            </Columns>
          </Page>
          <ScrollV>
            <ScrollArrow aria-label="Yukarı"><Arrow dir="u" /></ScrollArrow>
            <ThumbV><svg width="8" height="8" viewBox="0 0 8 8"><path d="M0 .5H8M0 2.500H8M0 4.500H8M0 6.500H8" stroke="#4a5a80" /></svg></ThumbV>
            <ScrollArrow aria-label="Aşağı"><Arrow dir="d" /></ScrollArrow>
          </ScrollV>
          <ScrollH>
            <ScrollArrow aria-label="Sola kaydır"><Arrow dir="l" /></ScrollArrow>
            <ThumbH><svg width="8" height="8" viewBox="0 0 8 8"><path d="M.5 0V8M2.500 0V8M4.500 0V8M6.500 0V8" stroke="#4a5a80" /></svg></ThumbH>
            <ScrollArrow aria-label="Sağa kaydır"><Arrow dir="r" /></ScrollArrow>
          </ScrollH>
        </Workspace>
      </Client>
      <AddressDialog />
    </Window>
  );
}
